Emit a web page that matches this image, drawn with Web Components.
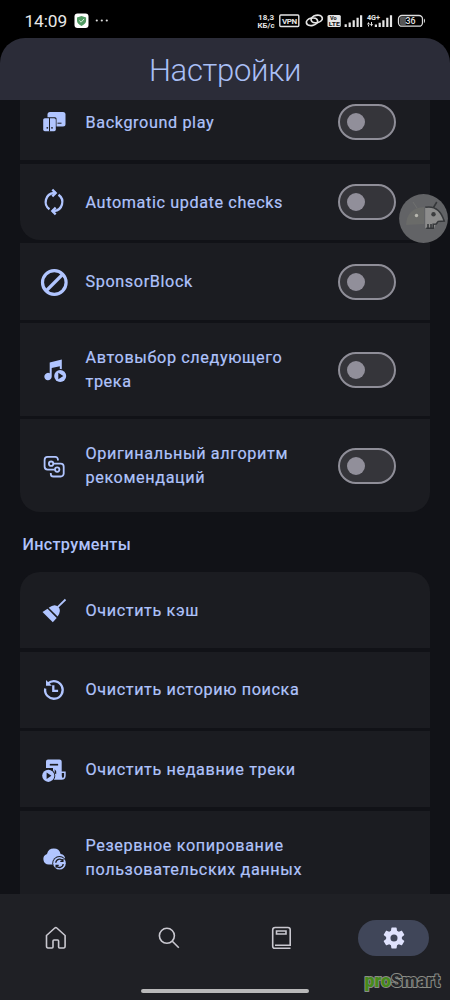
<!DOCTYPE html>
<html lang="ru"><head><meta charset="utf-8"><title>Настройки</title>
<style>html,body{margin:0;height:100%;background:#000;overflow:hidden}body{font-family:Roboto,"Noto Sans",sans-serif}</style></head>
<body><settings-screen></settings-screen>
<script>
const define=(name,html)=>customElements.define(name,class extends HTMLElement{
  constructor(){super();this.attachShadow({mode:'open'}).innerHTML=html;}
});

const ICONS={
 background:'<rect x="8.500" y="5" width="18" height="14.500" rx="2.500"/><rect x="3.300" y="10.200" width="14.200" height="13.600" rx="1.500" fill="#1b1c21"/><rect x="4.200" y="11.200" width="12.600" height="13" rx="1.600"/><path d="M10.500 11v13.500" stroke="#1b1c21" stroke-width="1" fill="none"/><path d="M18.500 16.200h4" stroke="#1b1c21" stroke-width="1" fill="none"/><circle cx="8.300" cy="20.800" r=".9" fill="#1b1c21"/><circle cx="13" cy="20.800" r=".9" fill="#1b1c21"/>',
 update:'<g fill="none" stroke="currentColor" stroke-width="2.300"><path d="M10.500 22.300A9 9 0 0 1 14.800 6h2.200M19.500 7.700A9 9 0 0 1 15.200 24H13"/><path d="M13.300 2.700L16.700 6l-3.400 3.400M16.700 20.600L13.300 24l3.400 3.400"/></g>',
 block:'<g fill="none" stroke="currentColor" stroke-width="3.200"><circle cx="15.300" cy="15.500" r="11.800"/><path d="M7 24L23.500 7.500"/></g>',
 music:'<path d="M10.700 7.600L22.800 4.500v10h-2V11.200L12.700 13V21.500a3.700 3.700 0 1 1-2-3.200z"/><circle cx="21.200" cy="21" r="6.900" fill="#1b1c21"/><circle cx="21.200" cy="21" r="6"/><path d="M19.300 17.700v6.600l5-3.300z" fill="#1b1c21"/>',
 algorithm:'<g fill="none" stroke="currentColor" stroke-width="1.800" transform="translate(0 .8)"><path d="M18.900 8.800V7.700a2.600 2.600 0 0 0-2.600-2.600H8.600a3 3 0 0 0-3 3v6.700a3 3 0 0 0 3 3h7.200M11.800 21.300v.8a2.600 2.600 0 0 0 2.600 2.600h7.300a3 3 0 0 0 3-3v-6.800a3 3 0 0 0-3-3h-7.500"/><circle cx="12.100" cy="11.900" r="2.200"/><circle cx="18.200" cy="17.800" r="2.200"/></g>',
 broom:'<path d="M18.700 12.200L26.500 4.500" stroke="currentColor" stroke-width="1.800"/><path d="M9.700 12.700Q15.500 8.200 19.200 11.700T18.600 21.600z"/><path d="M8.500 13.800l9.200 9.200-3.900 4.200L3.500 17.100z"/>',
 history:'<g fill="none" stroke="currentColor" stroke-width="2.300"><path d="M6.200 13.500A8.800 8.800 0 1 0 9 8.400"/><path d="M14.300 10.200v5.700h4.800"/></g><path d="M7 5v5.800h5.800z"/>',
 recent:'<path d="M7 13V6.400Q7 4.400 9 4.400h11.500q2.200 0 2.200 2.200v10h4v4q0 4.200-4.200 4.200H14V13z"/><path d="M10.800 9.700h8.300" fill="none" stroke="#1b1c21" stroke-width="1.700"/><path d="M22.800 18h2.300v2.700q0 1.800-1.200 2.400-1.100-.5-1.100-2.100zM15.700 14.200l1.500 2v3l-1.500-1z" fill="#1b1c21"/><circle cx="9.300" cy="20.800" r="7" fill="#1b1c21"/><circle cx="9.300" cy="20.800" r="6.100"/><path d="M7.600 17.600v6.400l4.800-3.200z" fill="#1b1c21"/>',
 cloud:'<g transform="translate(0 .7)"><path d="M9.800 20.700A5.400 5.400 0 0 1 8 10.200a7 7 0 0 1 13.600 0 5.200 5.200 0 0 1 4.500 5.300c0 3-2 5.200-5 5.200z"/><circle cx="20.500" cy="19.600" r="7.200" fill="#1b1c21"/><circle cx="20.500" cy="19.600" r="6.300"/><g fill="none" stroke="#1b1c21" stroke-width="1.300"><path d="M16.800 19a3.800 3.800 0 0 1 6.800-2M24.200 20.300a3.800 3.800 0 0 1-6.800 2M23.900 15.300v2.300h-2.600M17.100 24v-2.300h2.600"/></g></g>'
};

customElements.define('setting-icon',class extends HTMLElement{
  connectedCallback(){
    this.attachShadow({mode:'open'}).innerHTML=`<style>:host{display:block;width:30px;height:30px;color:#b1c5ff}svg{display:block;overflow:visible}</style><svg width="30" height="30" viewBox="0 0 30 30" fill="currentColor">${ICONS[this.getAttribute('name')]}</svg>`;
  }
});

define('toggle-switch',`<style>:host{display:flex;align-items:center;box-sizing:border-box;width:58px;height:36px;padding-left:7px;border:2.4px solid #8f8e98;border-radius:18px;background:#35353a}i{width:18px;height:18px;border-radius:50%;background:#918f9a}</style><i></i>`);

customElements.define('setting-row',class extends HTMLElement{
  connectedCallback(){
    const sw=this.hasAttribute('switch')?'<toggle-switch></toggle-switch>':'';
    this.attachShadow({mode:'open'}).innerHTML=`<style>
    :host{display:flex;align-items:center;box-sizing:border-box;flex:none;height:76.2px;padding:.6px 34px 0 19px;background:#1b1c21;color:#afc3fb;font-size:16.2px;line-height:24.4px;letter-spacing:.62px;white-space:nowrap}
    :host([tall]){height:92.6px}:host([first]){border-radius:20px 20px 0 0}:host([last]){border-radius:0 0 20px 20px}
    .label{flex:1;padding:1.4px 0 0 16.5px;-webkit-text-stroke:.2px currentColor}</style>
    <setting-icon name="${this.getAttribute('icon')}"></setting-icon><div class="label"><slot></slot></div>${sw}`;
  }
});

define('status-bar',`<style>
 :host{display:flex;align-items:center;box-sizing:border-box;height:38px;padding:3px 24px 0 24.5px;background:#000;color:#e8e8e8}
 .time{font-size:17.3px;width:43.5px;letter-spacing:-.1px;margin-right:6px}
 svg{display:block}.status{margin-left:auto}.text{font-family:Roboto,sans-serif;font-weight:700}
 </style><div class="time">14:09</div>
 <svg width="40" height="16" viewBox="0 0 40 16"><rect x=".5" y=".5" width="14" height="14.500" rx="3" fill="#fff"/><path d="M7.500 3l4.600 1.500v3.200q0 3-4.600 5.300Q3 10.700 3 7.700V4.500z" fill="#519a63"/><path d="M5.300 7.500l1.800 1.700 3-3.300" fill="none" stroke="#d5eed9"/><g fill="#ddd"><circle cx="22.800" cy="7.500" r="1.100"/><circle cx="27.800" cy="7.500" r="1.100"/><circle cx="32.800" cy="7.500" r="1.100"/></g></svg>
 <svg class="status" width="170" height="18" viewBox="256 12 170 18" fill="#e5e5e5"><text class="text" x="258" y="20" font-size="8" textLength="16.200">18,3</text><text class="text" x="257.500" y="27.500" font-size="8" textLength="17" lengthAdjust="spacingAndGlyphs">КБ/с</text><rect x="279.800" y="15" width="19" height="11.500" rx="1" fill="none" stroke="#e5e5e5" stroke-width="1.400"/><text class="text" x="282" y="23.600" font-size="8" textLength="15.200">VPN</text>
 <g fill="none" stroke="#e5e5e5" stroke-width="1.700"><ellipse cx="312" cy="21.800" rx="5.700" ry="3.700" transform="rotate(-12 312 21.800)"/><ellipse cx="316.700" cy="19" rx="5.700" ry="3.700" transform="rotate(-12 316.700 19)"/></g>
 <rect x="327.500" y="15" width="13.300" height="12" rx="1.500"/><text class="text" x="330" y="20.400" font-size="5.600" fill="#111">Vo</text><text class="text" x="328.800" y="26.300" font-size="5.600" fill="#111" textLength="11" lengthAdjust="spacingAndGlyphs">LTE</text>
 <path d="M344.600 24.200h2.200v2.800h-2.200zM348.600 22.500h2.200v4.500h-2.200zM352.600 20.300h2.200v6.700h-2.200zM356.500 17.800h2.200v9.200h-2.200zM360 15.300h2.200v11.700h-2.200z"/>
 <text class="text" x="367" y="20" font-size="7.300" textLength="13">4G+</text><path d="M367 24.500h3l-1.500-2.500zM368 24h1v2.500h-1zM370 24h3l-1.500 2.500zM371 22h1v2.500h-1zM374.800 24.500h2.200v2.500h-2.200zM378.600 22.800h2.200v4.200h-2.200zM382.300 20.300h2.200v6.700h-2.200zM386.200 17.800h2.200v9.200h-2.200zM389.900 15.300h2.200v11.700h-2.200z"/>
 <rect x="400" y="17" width="6" height="8" rx="1" fill="#555"/><rect x="398.500" y="15.500" width="24" height="10.700" rx="3.500" fill="none" stroke="#ddd" stroke-width="1.300"/><path d="M424 18.500q2 2.200 0 4.800z"/><text class="text" x="405.500" y="24.200" font-size="8.800" style="font-weight:500">36</text></svg>`);

define('app-header',`<style>:host{display:flex;align-items:center;justify-content:center;flex:none;height:62px;background:#2b2c38;border-radius:25px 25px 0 0;color:#a9bff5;font-size:31px;font-weight:300}
 span{padding-top:3px;letter-spacing:-.3px}</style><span><slot></slot></span>`);

define('tab-item',`<style>:host{display:flex;align-items:center;justify-content:center;width:71px;height:36px;border-radius:18px;color:#c9c8d0}:host([active]){background:#404659;color:#dfe2fd}</style><slot></slot>`);

define('bottom-nav',`<style>:host{display:flex;flex-direction:column;box-sizing:border-box;height:106px;padding-top:26px;background:#1f2025}
 nav{display:flex;justify-content:space-between;padding:0 21px 0 20.6px}
 .handle{width:168px;height:4px;border-radius:2px;background:#b9b9ba;margin:33px auto 0}
 svg{display:block;overflow:visible}.shape{fill:none;stroke:currentColor;stroke-width:1.600}</style>
 <nav>
 <tab-item><svg class="shape" width="22" height="24" viewBox="0 0 22 24"><path d="M1.500 9.500L9.800 2q1-.9 2 0l8.300 7.500v10.500q0 2-1.500 2h-4q-1 0-1-1v-6q0-1-1-1H9q-1 0-1 1v6q0 1-1 1H3q-1.500 0-1.500-2z"/></svg></tab-item>
 <tab-item><svg class="shape" width="22" height="24" viewBox="0 0 22 24"><circle cx="8.900" cy="9.800" r="7.500"/><path d="M14.300 15.200l6.500 6.500"/></svg></tab-item>
 <tab-item><svg class="shape" width="22" height="24" viewBox="0 0 22 24"><path d="M20.500 22.300H4.700a2 2 0 0 1-2-2V4q0-2.500 2.500-2.500h12.700q2.300 0 2.300 2.300v15.500H5M6.500 5h9.500v3H6.500z"/></svg></tab-item>
 <tab-item active><svg width="24" height="24" viewBox="0 0 24 24" fill="currentColor"><path transform="translate(-1.200 -1.200) scale(1.100)" d="M19.140 12.940c.04-.3.060-.61.060-.94s-.02-.64-.07-.94l2.030-1.580c.18-.14.230-.41.120-.61l-1.920-3.320a.49.49 0 0 0-.59-.22l-2.390.96a7 7 0 0 0-1.620-.94l-.36-2.540A.48.48 0 0 0 13.920 2.400h-3.840a.47.47 0 0 0-.47.41l-.36 2.540c-.59.24-1.130.57-1.620.94l-2.390-.96a.47.47 0 0 0-.59.22L2.740 8.870a.48.48 0 0 0 .12.610l2.030 1.580a6 6 0 0 0-.02 1.880l-2.030 1.580a.49.49 0 0 0-.12.610l1.920 3.320c.12.220.37.290.59.220l2.390-.96c.5.380 1.030.7 1.620.94l.36 2.540c.05.240.24.410.48.410h3.840c.24 0 .44-.17.47-.41l.36-2.540a7 7 0 0 0 1.620-.94l2.390.96c.22.080.47 0 .59-.22l1.920-3.320a.47.47 0 0 0-.12-.61zM12 15.200a3.200 3.200 0 1 1 0-6.400 3.200 3.200 0 0 1 0 6.400z"/></svg></tab-item>
 </nav><div class="handle"></div>`);

define('floating-badge',`<style>:host{display:block;position:absolute;left:399px;top:194px;width:49px;height:49px}svg{display:block}</style>
<svg width="49" height="49" viewBox="0 0 49 49"><circle cx="24.500" cy="24.500" r="24.400" fill="#626366"/><path d="M7 31q1-17 18-18v17z" fill="#6a6b69"/><path d="M18 14l-4-6" stroke="#707170"/><circle cx="17.500" cy="21.500" r="1.700" fill="#b6b6ae"/><path d="M26.200 13q14-2 19 14l-8 2-2 5-9 0z" fill="#8c8c8c"/><path d="M26.200 13.300q14-2.500 19 13.700l-6 .5-2 2.500-3 .2v4h-7M29 34v-4M32 34v-4M34.500 13.500L37.800 8" fill="none" stroke="#35373a" stroke-width="1.600"/><circle cx="34.500" cy="20.300" r="2.200" fill="#3b3c3e"/></svg>`);

define('site-mark',`<style>:host{display:block;position:absolute;left:362px;top:970px;width:84px;height:24px}svg{display:block}text{font:900 18px Roboto,sans-serif;paint-order:stroke;stroke:#8a8c86;stroke-width:2px;stroke-linejoin:round}</style>
<svg width="84" height="24" viewBox="0 0 84 24"><text x="2.500" y="17" fill="#468a1a" textLength="75.500" lengthAdjust="spacingAndGlyphs">pro<tspan fill="#25272a">Smart</tspan></text></svg>`);

define('settings-screen',`<style>
 :host{display:grid;grid-template-rows:38px 62px 794px 106px;width:450px;height:1000px;position:relative;overflow:hidden;background:#111217}
 .top{background:#000}
 main{display:flex;flex-direction:column;overflow:hidden;padding:0 20px}
 .list{display:flex;flex-direction:column;gap:3.500px}
 .toggles{margin-top:-16px}
 h2{margin:0;padding-left:2.500px;height:60.100px;line-height:66px;font-size:16.200px;font-weight:500;letter-spacing:.3px;color:#afc3fb;flex:none}
 </style>
 <status-bar></status-bar>
 <div class="top"><app-header>Настройки</app-header></div>
 <main><div class="list toggles">
 <setting-row icon="background" switch>Background play</setting-row>
 <setting-row icon="update" switch last>Automatic update checks</setting-row>
 <setting-row icon="block" switch>SponsorBlock</setting-row>
 <setting-row icon="music" switch tall>Автовыбор следующего<br>трека</setting-row>
 <setting-row icon="algorithm" switch tall last>Оригинальный алгоритм<br>рекомендаций</setting-row>
 </div><h2>Инструменты</h2><div class="list">
 <setting-row icon="broom" first>Очистить кэш</setting-row>
 <setting-row icon="history">Очистить историю поиска</setting-row>
 <setting-row icon="recent">Очистить недавние треки</setting-row>
 <setting-row icon="cloud" tall>Резервное копирование<br>пользовательских данных</setting-row>
 </div></main><bottom-nav></bottom-nav><floating-badge></floating-badge><site-mark></site-mark>`);
</script></body></html>
